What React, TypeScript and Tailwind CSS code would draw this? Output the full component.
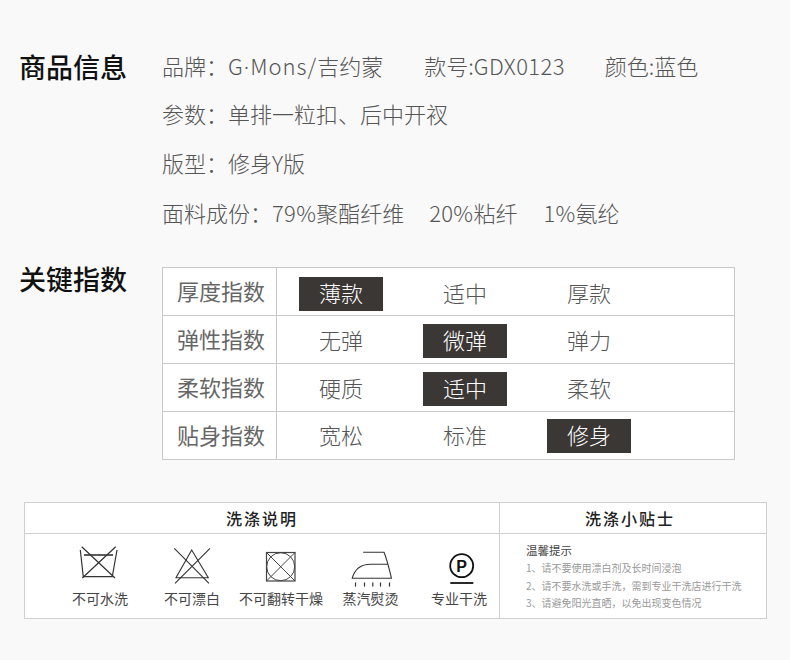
const font = { fontFamily: '"Noto Sans CJK SC", sans-serif' };
const C = "\uFF1A";
const K = "\uFF0C";

const rows = [
  { label: "厚度指数", pt: "pt-[9px]", cells: ["薄款", "适中", "厚款"], on: 0 },
  { label: "弹性指数", pt: "pt-[8px]", cells: ["无弹", "微弹", "弹力"], on: 1 },
  { label: "柔软指数", pt: "pt-[8px]", cells: ["硬质", "适中", "柔软"], on: 1 },
  { label: "贴身指数", pt: "pt-[7px]", cells: ["宽松", "标准", "修身"], on: 2 },
];

function Tub() {
  return (
    <svg width="44" height="44" viewBox="0 0 44 44" fill="none" stroke="#333" strokeWidth="1.2">
      <path d="M2.3 6L5.3 32.7H34.3L39 6" />
      <path d="M6 11H35" strokeWidth="1.6" />
      <path d="M3.7 2.7L37 34M37.7 2.7L4.3 34" />
    </svg>
  );
}
function Triangle() {
  return (
    <svg width="44" height="44" viewBox="0 0 44 44" fill="none" stroke="#333" strokeWidth="1.1">
      <path d="M21.7 6L6 33.7H38.3Z" />
      <path d="M4.3 4.3L39 39.3M40 4.3L5 39.3" />
    </svg>
  );
}
function Dryer() {
  return (
    <svg width="44" height="44" viewBox="0 0 44 44" fill="none" stroke="#444" strokeWidth="1">
      <rect x="7.5" y="8.5" width="28.5" height="28.5" strokeWidth="1.2" />
      <circle cx="21.7" cy="22.7" r="14" />
      <path d="M7.5 8.5L36 37M36 8.5L7.5 37" />
    </svg>
  );
}
function Iron() {
  return (
    <svg width="44" height="44" viewBox="-1.5 0 44 44" fill="none" stroke="#333" strokeWidth="1.1">
      <path d="M12.7 8.3H33.5C36 14 39 26 41 34.3H1.7C4 26 10 20.3 20 20.3H37.7" />
      <path d="M5 38.5V42.5M14 38.5V42.5M22.3 38.5V42.5M30 38.5V42.5M39 38.5V42.5" strokeWidth="1.2" />
    </svg>
  );
}
function Pro() {
  return (
    <svg width="44" height="44" viewBox="0 0 44 44" fill="none" stroke="#111">
      <circle cx="24.7" cy="21.7" r="11.5" strokeWidth="1.8" />
      <text x="24.7" y="27.5" textAnchor="middle" fontSize="16" fontWeight="700" fill="#111" stroke="none" style={{ fontFamily: '"Liberation Sans", sans-serif' }}>P</text>
      <path d="M13.3 39H36.3" strokeWidth="1.8" />
    </svg>
  );
}

const care = [
  { Icon: Tub, label: "不可水洗" },
  { Icon: Triangle, label: "不可漂白" },
  { Icon: Dryer, label: "不可翻转干燥" },
  { Icon: Iron, label: "蒸汽熨烫" },
  { Icon: Pro, label: "专业干洗" },
];

export default function App() {
  return (
    <div className="w-[790px] h-[660px] bg-[#f9f9f9] overflow-hidden pt-[41px]" style={font}>
      <div className="flex pl-5">
        <div className="w-[142px] text-[27px] font-medium leading-[52px] text-[#111] -ml-px">商品信息</div>
        <div className="ml-px text-[22px] font-light leading-[49px] text-[#555]">
          <div className="flex h-[48px]">
            <span>品牌{C}<span className="tracking-[1px]">G<span style={{ fontFamily: '"Noto Sans", sans-serif' }}>·</span>Mons/</span>吉约蒙</span>
            <span className="ml-[41px]">款号:<span className="tracking-[0.4px]">GDX0123</span></span>
            <span className="ml-[40px]">颜色:蓝色</span>
          </div>
          <div>参数{C}单排一粒扣、后中开衩</div>
          <div>版型{C}修身Y版</div>
          <div className="flex pt-px">
            <span>面料成份{C}<span className="tracking-[0.3px]">79%</span>聚酯纤维</span>
            <span className="ml-[25px]"><span className="tracking-[0.3px]">20%</span>粘纤</span>
            <span className="ml-[26px]"><span className="tracking-[0.3px]">1%</span>氨纶</span>
          </div>
        </div>
      </div>

      <div className="flex pl-5 mt-[30px]">
        <div className="w-[142px] -ml-px text-[27px] font-medium leading-[24px] text-[#111]">关键指数</div>
        <div className="ml-px w-[573px] border border-[#c9c9c9] bg-white text-[22px] font-light text-[#555]">
          {rows.map((r, i) => (
            <div key={r.label} className={`flex ${i < 3 ? "h-[48px] border-b border-[#c9c9c9]" : "h-[47px]"}`}>
              <div className="w-[114px] pl-[14px] pb-[2px] border-r border-[#c9c9c9] flex items-center font-normal text-[#666]">{r.label}</div>
              <div className={`flex pl-[2px] ${r.pt}`}>
                {r.cells.map((c, j) => (
                  <div key={c} className="w-[124px] flex justify-center">
                    <span className={`w-[84px] h-[34px] pb-[5px] flex items-center justify-center leading-[34px] ${j === r.on ? "bg-[#3b3735] text-white" : ""}`}>{c}</span>
                  </div>
                ))}
              </div>
            </div>
          ))}
        </div>
      </div>

      <div className="mx-6 mt-[42px] w-[743px] border border-[#cfcfcf] bg-white">
        <div className="flex h-[31px] border-b border-[#cfcfcf] text-[16px] font-medium leading-[30px] text-[#222] text-center tracking-[2px]">
          <div className="w-[475px] border-r border-[#cfcfcf]">洗涤说明</div>
          <div className="flex-1 pr-[6px]">洗涤小贴士</div>
        </div>
        <div className="flex h-[84px]">
          <div className="w-[475px] border-r border-[#cfcfcf] pl-[29px] pt-[10px] grid grid-cols-[92px_92px_86px_93px_84px]">
            {care.map(({ Icon, label }) => (
              <div key={label} className="flex flex-col items-center">
                <Icon />
                <div className="text-[14px] leading-5 text-[#444] whitespace-nowrap">{label}</div>
              </div>
            ))}
          </div>
          <div className="flex-1 pl-[26px] pt-[7px]">
            <div className="text-[11.5px] leading-[18px] text-[#444]">温馨提示</div>
            <div className="text-[10px] leading-[17.5px] text-[#999] whitespace-nowrap">
              <div>1、请不要使用漂白剂及长时间浸泡</div>
              <div>2、请不要水洗或手洗{K}需到专业干洗店进行干洗</div>
              <div>3、请避免阳光直晒{K}以免出现变色情况</div>
            </div>
          </div>
        </div>
      </div>
    </div>
  );
}
